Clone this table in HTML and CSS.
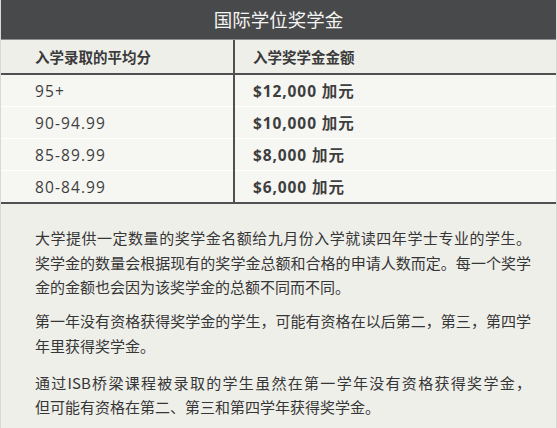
FILE: index.html
```html
<!DOCTYPE html>
<html lang="zh">
<head>
<meta charset="utf-8">
<link rel="stylesheet" href="styles.css">
</head>
<body>
<div class="card">
  <div class="title">国际学位奖学金</div>
  <table class="grid">
    <thead>
      <tr><th class="c1">入学录取的平均分</th><th class="c2">入学奖学金金额</th></tr>
    </thead>
    <tbody>
      <tr><td class="c1">95+</td><td class="c2"><b>$12,000 加元</b></td></tr>
      <tr><td class="c1">90-94.99</td><td class="c2"><b>$10,000 加元</b></td></tr>
      <tr><td class="c1">85-89.99</td><td class="c2"><b>$8,000 加元</b></td></tr>
      <tr><td class="c1">80-84.99</td><td class="c2"><b>$6,000 加元</b></td></tr>
    </tbody>
  </table>
  <div class="notes">
    <p><span class="line">大学提供一定数量的奖学金名额给九月份入学就读四年学士专业的学生。</span><span class="line">奖学金的数量会根据现有的奖学金总额和合格的申请人数而定。每一个奖学</span>金的金额也会因为该奖学金的总额不同而不同。</p>
    <p><span class="line">第一年没有资格获得奖学金的学生，可能有资格在以后第二，第三，第四学</span>年里获得奖学金。</p>
    <p class="last"><span class="line">通过ISB桥梁课程被录取的学生虽然在第一学年没有资格获得奖学金，</span>但可能有资格在第二、第三和第四学年获得奖学金。</p>
  </div>
</div>
</body>
</html>
```
FILE: styles.css
```css
html, body {
  margin: 0;
  padding: 0;
  background: #efefea;
}
body {
  font-family: "Open Sans", "Noto Sans CJK SC", sans-serif;
  color: #3a3a3a;
  width: 557px;
  height: 428px;
  overflow: hidden;
}
.card {
  border-left: 1px solid #d8d8d4;
  border-right: 1px solid #d8d8d4;
  min-height: 428px;
  box-sizing: border-box;
}
.title {
  height: 39px;
  background: #48494b;
  color: #f4f4f2;
  font-family: "Noto Sans CJK SC", sans-serif;
  font-size: 18.5px;
  line-height: 39px;
  text-align: center;
  border-bottom: 1px solid #8d8e8f;
}
.grid {
  width: 100%;
  border-collapse: collapse;
  table-layout: fixed;
}
.grid .c1 {
  width: 233px;
  padding-left: 34px;
  border-right: 2px solid #505052;
}
.grid .c2 {
  padding-left: 18px;
}
.grid th {
  height: 34px;
  padding-top: 0;
  padding-bottom: 0;
  background: #efefea;
  text-align: left;
  font-family: "Noto Sans CJK SC", sans-serif;
  font-size: 14.5px;
  font-weight: 700;
  color: #3a3a3a;
  border-bottom: 2px solid #505052;
  box-sizing: border-box;
}
.grid td {
  height: 31px;
  padding-top: 0;
  padding-bottom: 0;
  background: #f6f6f3;
  border-bottom: 1px solid #ffffff;
  font-size: 15.5px;
  letter-spacing: 1.1px;
  color: #3e3e3e;
}
.grid td b {
  font-weight: 700;
  letter-spacing: 0.9px;
  font-family: "Open Sans", "Noto Sans CJK SC", sans-serif;
}
.grid tbody tr:last-child td {
  border-bottom: 2px solid #505052;
}
.notes {
  width: 496px;
  padding: 22px 0 0 34px;
  font-family: "Noto Sans CJK SC", sans-serif;
  font-size: 15px;
  color: #363636;
}
.notes p {
  margin: 0 0 9px 0;
  line-height: 24.7px;
}
.notes .line {
  display: block;
  white-space: nowrap;
  text-align: justify;
  text-align-last: justify;
}
.notes p.last {
  margin-top: 12px;
}
```
